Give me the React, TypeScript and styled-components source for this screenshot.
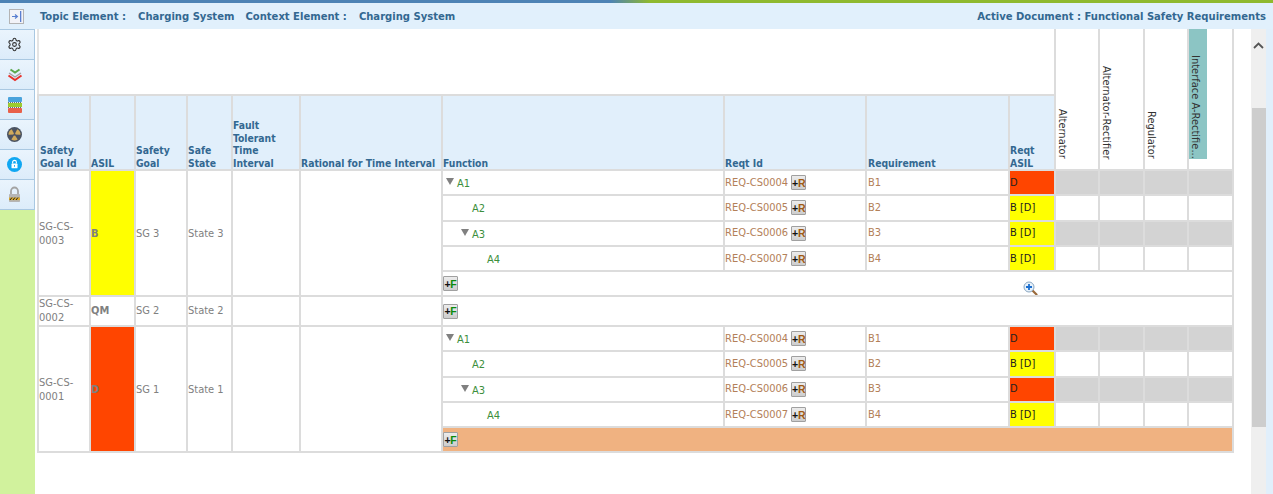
import React from 'react';
import styled, { createGlobalStyle } from 'styled-components';
import { Settings } from 'lucide-react';

const GlobalStyle = createGlobalStyle`
	html, body {
		margin: 0;
		padding: 0;
		background: #fff;
	}
	body {
		font-family: 'DejaVu Sans', 'Noto Sans', sans-serif;
		font-stretch: condensed;
		font-size: 11px;
	}
`;

const Page = styled.div`
	width: 1273px;
	height: 494px;
	display: flex;
	flex-direction: column;
	overflow: hidden;
`;

const TopStrip = styled.div`
	height: 3px;
	flex: none;
	background: linear-gradient(90deg, #4d83b5 0, #4d83b5 610px, #8fb92e 650px, #8fb92e 100%);
`;

const TopBar = styled.div`
	height: 26px;
	flex: none;
	display: flex;
	align-items: center;
	background: #e1f0fc;
	color: #336891;
	font-weight: 700;
	font-size: 11.15px;
`;

const TopIcon = styled.div`
	width: 40px;
	flex: none;
	display: flex;
	justify-content: center;
	padding-right: 8px;
	box-sizing: border-box;
`;

const TopLabel = styled.span<{ $gap: number }>`
	margin-right: ${p => p.$gap}px;
	white-space: pre;
`;

const ActiveDoc = styled.span`
	margin-left: auto;
	margin-right: 7px;
`;

const Body = styled.div`
	flex: 1;
	display: flex;
	min-height: 0;
`;

const Sidebar = styled.div`
	width: 35px;
	flex: none;
	display: flex;
	flex-direction: column;
	background: #d1f29d;
`;

const SideButton = styled.div`
	height: 30px;
	flex: none;
	box-sizing: border-box;
	display: flex;
	align-items: center;
	justify-content: center;
	padding-right: 5px;
	background: linear-gradient(180deg, #eaf4fd, #dcecfa);
	border-top: 1px solid #a9c8e2;
	border-right: 1px solid #a9c8e2;
	&:last-child {
		height: 31px;
		border-bottom: 1px solid #a9c8e2;
	}
`;

const Main = styled.div`
	flex: 1;
	min-width: 0;
	padding-left: 2px;
	overflow: hidden;
`;

const Table = styled.table`
	table-layout: fixed;
	width: 1195px;
	border-collapse: collapse;
	border-left: 2px solid #e4e4e4;
`;

const Col = styled.col<{ $w: number }>`
	width: ${p => p.$w}px;
`;

const Row = styled.tr<{ $h: number }>`
	height: ${p => p.$h}px;
`;

const Cell = styled.td`
	border: 2px solid #dcdcdc;
	padding: 0;
	line-height: 14px;
	overflow: hidden;
`;

const BlankHead = styled.td`
	border-bottom: 2px solid #dcdcdc;
	border-right: 2px solid #dcdcdc;
	padding: 0;
`;

const Head = styled.th<{ $pad: boolean }>`
	border: 2px solid #dcdcdc;
	background: #e1effb;
	color: #336891;
	font-size: 10.3px;
	font-weight: 700;
	line-height: 12.5px;
	text-align: left;
	vertical-align: bottom;
	padding: 0 0 0 ${p => (p.$pad ? 1 : 0)}px;
`;

const VerticalHead = styled.th`
	border: 2px solid #dcdcdc;
	border-top: 0;
	padding: 0;
	vertical-align: top;
	text-align: left;
`;

const VerticalLabel = styled.div<{ $mark?: boolean }>`
	writing-mode: vertical-lr;
	width: 18px;
	height: 130px;
	box-sizing: border-box;
	text-align: right;
	font-size: 11px;
	font-weight: 400;
	color: #333;
	line-height: 12px;
	white-space: nowrap;
	background: ${p => (p.$mark ? '#8cc5c4' : 'transparent')};
`;

const GoalCell = styled(Cell)<{ $bg?: string; $bold?: boolean; $tall: boolean }>`
	color: #808080;
	padding-top: ${p => (p.$tall ? 2 : 0)}px;
	background: ${p => p.$bg || '#fff'};
	font-weight: ${p => (p.$bold ? 700 : 400)};
`;

const FnCell = styled(Cell)`
	color: #3c8f3c;
`;

const FnInner = styled.div<{ $level: number }>`
	display: flex;
	align-items: center;
	padding-left: ${p => p.$level * 15 + 3}px;
	padding-top: 3px;
`;

const Twisty = styled.span`
	width: 0;
	height: 0;
	margin-right: 3px;
	margin-bottom: 5px;
	border-left: 4.5px solid transparent;
	border-right: 4.5px solid transparent;
	border-top: 7px solid #808080;
`;

const TwistySpace = styled.span`
	width: 11px;
`;

const ReqCell = styled(Cell)<{ $pad?: boolean }>`
	color: #b38058;
	padding-left: ${p => (p.$pad ? 1 : 0)}px;
`;

const ReqInner = styled.div`
	display: flex;
	align-items: center;
	gap: 3px;
`;

const AsilCell = styled(Cell)<{ $bg: string }>`
	background: ${p => p.$bg};
	color: #222;
`;

const MatrixCell = styled(Cell)<{ $off: boolean }>`
	background: ${p => (p.$off ? '#d3d3d3' : '#fff')};
`;

const AddRowCell = styled(Cell)<{ $bg?: string }>`
	background: ${p => p.$bg || '#fff'};
`;

const AddRowInner = styled.div`
	display: flex;
	align-items: center;
`;

const ZoomSlot = styled.span`
	margin: 5px 0 -5px 565px;
	display: flex;
`;

const AddButton = styled.span`
	width: 15px;
	height: 15px;
	box-sizing: border-box;
	display: inline-flex;
	align-items: center;
	justify-content: center;
	flex: none;
	border: 1px solid #a0a0a0;
	border-radius: 1px;
	background: linear-gradient(180deg, #ececec, #cdcdcd);
	font-family: 'Liberation Sans', sans-serif;
	font-size: 10.5px;
	font-weight: 700;
	line-height: 12px;
	letter-spacing: -0.3px;
	color: #111;
`;

const AddLetter = styled.span<{ $color: string }>`
	color: ${p => p.$color};
`;

const Scroller = styled.div`
	width: 15px;
	flex: none;
	display: flex;
	flex-direction: column;
	background: #efefef;
`;

const ScrollArrow = styled.div`
	height: 79px;
	flex: none;
	display: flex;
	justify-content: center;
	padding-top: 13px;
	box-sizing: border-box;
`;

const ScrollThumb = styled.div`
	height: 319px;
	flex: none;
	margin-left: 1px;
	background: #cdcdcd;
`;

const EdgeStrip = styled.div`
	width: 7px;
	flex: none;
	background: #e1effb;
`;

const COLS = [52, 45, 52, 45, 68, 142, 282, 142, 143, 46, 44, 45, 44, 45];

const HEADS = [
	{ label: 'Safety Goal Id', pad: true },
	{ label: 'ASIL', pad: false },
	{ label: 'Safety Goal', pad: false },
	{ label: 'Safe State', pad: false },
	{ label: 'Fault Tolerant Time Interval', pad: false },
	{ label: 'Rational for Time Interval', pad: false },
	{ label: 'Function', pad: false },
	{ label: 'Reqt Id', pad: false },
	{ label: 'Requirement', pad: true },
	{ label: 'Reqt ASIL', pad: false },
];

const MATRIX = ['Alternator', 'Alternator-Rectifier', 'Regulator', 'Interface A-Rectifie...'];

const RED = '#ff4500';
const YELLOW = '#ffff00';

const requirements = (asil3: string) => [
	{ fn: 'A1', level: 0, open: true, id: 'REQ-CS0004', req: 'B1', asil: 'D', off: true, h: 25 },
	{ fn: 'A2', level: 1, open: false, id: 'REQ-CS0005', req: 'B2', asil: 'B [D]', off: false, h: 25.5 },
	{ fn: 'A3', level: 1, open: true, id: 'REQ-CS0006', req: 'B3', asil: asil3, off: true, h: 25.5 },
	{ fn: 'A4', level: 2, open: false, id: 'REQ-CS0007', req: 'B4', asil: 'B [D]', off: false, h: 25 },
];

const GOALS = [
	{ id: 'SG-CS-0003', asil: 'B', bg: YELLOW, goal: 'SG 3', state: 'State 3', reqs: requirements('B [D]'), addBg: '#fff', zoom: true },
	{ id: 'SG-CS-0002', asil: 'QM', bg: '#fff', goal: 'SG 2', state: 'State 2', reqs: [], addBg: '#fff', zoom: false },
	{ id: 'SG-CS-0001', asil: 'D', bg: RED, goal: 'SG 1', state: 'State 1', reqs: requirements('D'), addBg: '#f0b281', zoom: false },
];

const CollapseIcon = () => (
	<svg width="15" height="15" viewBox="0 0 15 15">
		<rect x="0.5" y="0.5" width="14" height="14" fill="#f2f3f8" stroke="#b4b4b4" />
		<rect x="11" y="2" width="1.3" height="11" fill="#5a7fd0" />
		<path d="M3 7.5h5M6 5.5l2.4 2L6 9.5" fill="none" stroke="#5a7fd0" strokeWidth="1.2" />
	</svg>
);

const ChevronsIcon = () => (
	<svg width="16" height="16" viewBox="0 0 16 16" fill="none" strokeWidth="2">
		<path d="M3.5 2.5L8 5.5l4.5-3" stroke="#5aa84a" />
		<path d="M2 6L8 10l6-4" stroke="#a0a0a0" strokeWidth="1.3" />
		<path d="M1.5 8.5L8 13l6.5-4.5" stroke="#e8322c" />
	</svg>
);

const StackIcon = () => (
	<svg width="14" height="16" viewBox="0 0 14 16">
		<rect x="0" y="0" width="14" height="5" rx="1" fill="#4aa3dc" />
		<rect x="0" y="6" width="14" height="4" fill="#9ccb2e" />
		<path d="M0 5.5h14M0 10.5h14" stroke="#333" strokeWidth="0.7" strokeDasharray="1 1" />
		<rect x="0" y="11" width="14" height="5" rx="1" fill="#e8604a" />
	</svg>
);

const RadiationIcon = () => (
	<svg width="15" height="15" viewBox="0 0 16 16">
		<circle cx="8" cy="8" r="8" fill="#4a5261" />
		<path d="M8 8L4.6 2.6a6.3 6.3 0 0 1 6.8 0z" fill="#cfaa5c" transform="rotate(180 8 8)" />
		<path d="M8 8L4.6 2.6a6.3 6.3 0 0 1 6.8 0z" fill="#cfaa5c" transform="rotate(60 8 8)" />
		<path d="M8 8L4.6 2.6a6.3 6.3 0 0 1 6.8 0z" fill="#cfaa5c" transform="rotate(300 8 8)" />
		<circle cx="8" cy="8" r="1.2" fill="#4a5261" />
	</svg>
);

const BlueLockIcon = () => (
	<svg width="15" height="15" viewBox="0 0 16 16">
		<circle cx="8" cy="8" r="8" fill="#10a7f2" />
		<path d="M6 7V5.6a2 2 0 0 1 4 0V7" fill="none" stroke="#fff" strokeWidth="1.2" />
		<rect x="4.8" y="7" width="6.4" height="5" rx="0.6" fill="#fff" />
		<rect x="7.5" y="8.6" width="1" height="1.8" fill="#10a7f2" />
	</svg>
);

const GrayLockIcon = () => (
	<svg width="13" height="17" viewBox="0 0 13 17">
		<path d="M3 8V5a3.5 3.5 0 0 1 7 0v3" fill="none" stroke="#a3a3a3" strokeWidth="1.8" />
		<rect x="1" y="8" width="11" height="8" rx="0.8" fill="#b5b5b5" />
		<rect x="1" y="11.5" width="11" height="2.6" fill="#d9a82e" />
		<path d="M2 14l2-2.5M5 14l2-2.5M8 14l2-2.5" stroke="#222" strokeWidth="1" />
	</svg>
);

const ZoomIcon = () => (
	<svg width="15" height="15" viewBox="0 0 15 15">
		<path d="M9.5 9.5l4 4" stroke="#9a6a3c" strokeWidth="2.2" strokeLinecap="round" />
		<circle cx="6" cy="6" r="5" fill="#e6f1fb" stroke="#8aa6c0" strokeWidth="1" />
		<path d="M6 3v6M3 6h6" stroke="#1c6fd0" strokeWidth="1.8" />
	</svg>
);

const ChevronUp = () => (
	<svg width="11" height="7" viewBox="0 0 11 7">
		<path d="M1 6l4.5-4.5L10 6" fill="none" stroke="#555" strokeWidth="1.8" />
	</svg>
);

const Add = ({ letter, color }: { letter: string; color: string }) => (
	<AddButton>
		+<AddLetter $color={color}>{letter}</AddLetter>
	</AddButton>
);

const Goal = ({ goal }: { goal: (typeof GOALS)[number] }) => {
	const span = goal.reqs.length + 1;
	const tall = span > 1;
	const info = (
		<>
			<GoalCell rowSpan={span} $tall={tall}>{goal.id}</GoalCell>
			<GoalCell rowSpan={span} $tall={tall} $bg={goal.bg} $bold>
				{goal.asil}
			</GoalCell>
			<GoalCell rowSpan={span} $tall={tall}>{goal.goal}</GoalCell>
			<GoalCell rowSpan={span} $tall={tall}>{goal.state}</GoalCell>
			<GoalCell rowSpan={span} $tall={tall} />
			<GoalCell rowSpan={span} $tall={tall} />
		</>
	);
	const addRow = (
		<AddRowCell colSpan={8} $bg={goal.addBg}>
			<AddRowInner>
				<Add letter="F" color="#0a8a0a" />
				{goal.zoom && (
					<ZoomSlot>
						<ZoomIcon />
					</ZoomSlot>
				)}
			</AddRowInner>
		</AddRowCell>
	);

	if (!tall) {
		return (
			<Row $h={30}>
				{info}
				{addRow}
			</Row>
		);
	}

	return (
		<>
			{goal.reqs.map((r, i) => (
				<Row $h={r.h} key={r.id}>
					{i === 0 && info}
					<FnCell>
						<FnInner $level={r.level}>
							{r.open ? <Twisty /> : <TwistySpace />}
							{r.fn}
						</FnInner>
					</FnCell>
					<ReqCell>
						<ReqInner>
							{r.id}
							<Add letter="R" color="#a05a14" />
						</ReqInner>
					</ReqCell>
					<ReqCell $pad>{r.req}</ReqCell>
					<AsilCell $bg={r.asil === 'D' ? RED : YELLOW}>{r.asil}</AsilCell>
					{MATRIX.map(m => (
						<MatrixCell $off={r.off} key={m} />
					))}
				</Row>
			))}
			<Row $h={25}>{addRow}</Row>
		</>
	);
};

export default function App() {
	return (
		<Page>
			<GlobalStyle />
			<TopStrip />
			<TopBar>
				<TopIcon>
					<CollapseIcon />
				</TopIcon>
				<TopLabel $gap={12}>Topic Element :</TopLabel>
				<TopLabel $gap={11}>Charging System</TopLabel>
				<TopLabel $gap={12}>Context Element :</TopLabel>
				<TopLabel $gap={0}>Charging System</TopLabel>
				<ActiveDoc>Active Document : Functional Safety Requirements</ActiveDoc>
			</TopBar>
			<Body>
				<Sidebar>
					<SideButton>
						<Settings size={15} color="#333" strokeWidth={1.7} />
					</SideButton>
					<SideButton>
						<ChevronsIcon />
					</SideButton>
					<SideButton>
						<StackIcon />
					</SideButton>
					<SideButton>
						<RadiationIcon />
					</SideButton>
					<SideButton>
						<BlueLockIcon />
					</SideButton>
					<SideButton>
						<GrayLockIcon />
					</SideButton>
				</Sidebar>
				<Main>
					<Table>
						<colgroup>
							{COLS.map((w, i) => (
								<Col $w={w} key={i} />
							))}
						</colgroup>
						<tbody>
							<Row $h={66}>
								<BlankHead colSpan={10} />
								{MATRIX.map((m, i) => (
									<VerticalHead rowSpan={2} key={m}>
										<VerticalLabel $mark={i === 3}>{m}</VerticalLabel>
									</VerticalHead>
								))}
							</Row>
							<Row $h={75}>
								{HEADS.map(h => (
									<Head $pad={h.pad} key={h.label}>
										{h.label}
									</Head>
								))}
							</Row>
							{GOALS.map(g => (
								<Goal goal={g} key={g.id} />
							))}
						</tbody>
					</Table>
				</Main>
				<Scroller>
					<ScrollArrow>
						<ChevronUp />
					</ScrollArrow>
					<ScrollThumb />
				</Scroller>
				<EdgeStrip />
			</Body>
		</Page>
	);
}
